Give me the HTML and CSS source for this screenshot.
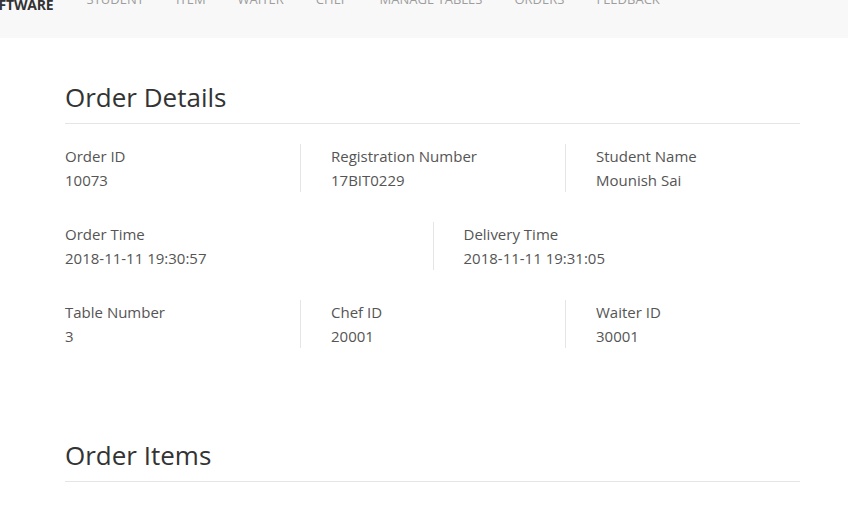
FILE: index.html
```html
<!DOCTYPE html>
<html>
<head>
<meta charset="utf-8">
<link rel="stylesheet" href="styles.css">
</head>
<body>
<nav class="navbar">
  <div class="nav-inner">
    <span class="brand">CANTEEN SOFTWARE</span>
    <ul class="nav-links">
      <li>STUDENT</li>
      <li>ITEM</li>
      <li>WAITER</li>
      <li>CHEF</li>
      <li>MANAGE TABLES</li>
      <li>ORDERS</li>
      <li>FEEDBACK</li>
    </ul>
  </div>
</nav>
<main class="container">
  <h1 class="section-title">Order Details</h1>
  <div class="row thirds">
    <div class="col"><div class="label">Order ID</div><div class="value">10073</div></div>
    <div class="col"><div class="label">Registration Number</div><div class="value">17BIT0229</div></div>
    <div class="col"><div class="label">Student Name</div><div class="value">Mounish Sai</div></div>
  </div>
  <div class="row halves">
    <div class="col"><div class="label">Order Time</div><div class="value">2018-11-11 19:30:57</div></div>
    <div class="col"><div class="label">Delivery Time</div><div class="value">2018-11-11 19:31:05</div></div>
  </div>
  <div class="row thirds">
    <div class="col"><div class="label">Table Number</div><div class="value">3</div></div>
    <div class="col"><div class="label">Chef ID</div><div class="value">20001</div></div>
    <div class="col"><div class="label">Waiter ID</div><div class="value">30001</div></div>
  </div>
  <h1 class="section-title items-title">Order Items</h1>
</main>
</body>
</html>
```
FILE: styles.css
```css
html, body {
  margin: 0;
  padding: 0;
  background: #fff;
  font-family: "Open Sans", "Noto Sans", sans-serif;
  color: #555;
  overflow: hidden;
}
.navbar {
  height: 38px;
  background: #f8f8f8;
  overflow: hidden;
}
.nav-inner {
  display: flex;
  align-items: flex-start;
  margin-top: -12px;
}
.brand {
  font-weight: bold;
  font-size: 14px;
  color: #333;
  margin-left: -87px;
  line-height: 20px;
  padding-top: 7px;
  letter-spacing: -0.2px;
}
.nav-links {
  list-style: none;
  display: flex;
  margin: 0 0 0 33px;
  padding: 0;
}
.nav-links li {
  font-size: 13px;
  color: #9d9d9d;
  line-height: 20px;
  margin-right: 32px;
  padding-top: 1px;
}
.container {
  margin: 0 48px 0 65px;
}
.section-title {
  font-size: 26px;
  font-weight: normal;
  color: #333;
  margin: 41px 0 0 0;
  line-height: 36px;
  padding-bottom: 8px;
  border-bottom: 1px solid #e5e5e5;
}
.row {
  display: grid;
  margin: 0 -30px;
}
.thirds { grid-template-columns: 1fr 1fr 1fr; }
.halves { grid-template-columns: 1fr 1fr; }
.row:first-of-type { margin-top: 20px; }
.row + .row { margin-top: 30px; }
.col {
  padding-left: 30px;
  font-size: 15px;
  line-height: 24px;
}
.col + .col { border-left: 1px solid #e5e5e5; }
.items-title { margin-top: 89px; }
```
